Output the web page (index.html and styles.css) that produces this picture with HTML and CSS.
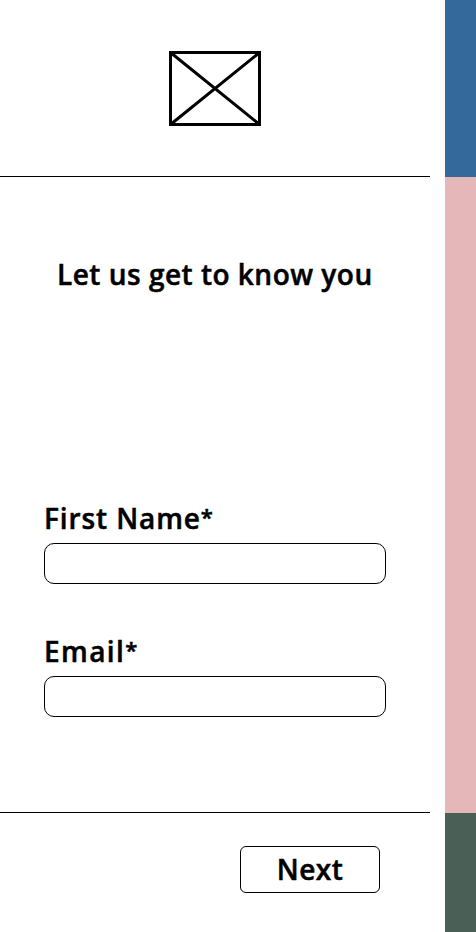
FILE: index.html
```html
<!DOCTYPE html>
<html lang="en">
<head>
<meta charset="utf-8">
<title>Let us get to know you</title>
<link rel="stylesheet" href="styles.css">
</head>
<body>
<div class="layout">
  <div class="screen">
    <header class="header">
      <svg class="logo" width="92" height="75" viewBox="0 0 92 75"><path d="M1.5 1.5H90.5V73.5H1.5ZL90.5 73.5M90.5 1.5L1.5 73.5" fill="none" stroke="#000" stroke-width="3"/></svg>
    </header>
    <main class="content">
      <h1 class="title">Let us get to know you</h1>
      <form class="form">
        <label class="field"><span class="label">First Name<span class="star">*</span></span><input class="input" type="text"></label>
        <label class="field"><span class="label email">Email<span class="star">*</span></span><input class="input" type="email"></label>
      </form>
    </main>
    <footer class="footer"><button class="next" type="button">Next</button></footer>
  </div>
  <aside class="rail"><div class="blue"></div><div class="pink"></div><div class="green"></div></aside>
</div>
</body>
</html>
```
FILE: styles.css
```css
* { box-sizing: border-box; }
body { margin: 0; background: #fff; color: #000; font-family: "Open Sans", sans-serif; }
.layout { display: flex; justify-content: space-between; width: 476px; height: 932px; overflow: hidden; }
.screen { display: flex; flex-direction: column; width: 430px; }
.header { height: 177px; padding-top: 51px; border-bottom: 1px solid #000; text-align: center; }
.logo { display: block; margin: 0 auto; }
.content { height: 635px; padding: 78px 44px 0; }
.title, .label, .next { font: 600 28px/38px "Open Sans", sans-serif; letter-spacing: 0.5px; white-space: nowrap; -webkit-text-stroke: 0.5px #000; }
.title { margin: 0; padding-left: 13px; height: 244px; }
.form { display: flex; flex-direction: column; gap: 52px; }
.field { display: block; height: 81px; }
.label { display: block; height: 40px; letter-spacing: 0.9px; }
.email { letter-spacing: 1.4px; }
.star { font-size: 22px; line-height: 1; position: relative; top: -4px; }
.input { display: block; width: 342px; height: 41px; margin: 4px 0 0; border: 1px solid #000; border-radius: 10px; background: #fff; }
.footer { display: flex; justify-content: flex-end; height: 120px; padding: 33px 50px 0 0; border-top: 1px solid #000; }
.next { display: block; width: 140px; height: 47px; padding: 0 0 2px; border: 1px solid #000; border-radius: 6px; background: #fff; color: #000; text-align: center; }
.rail { display: grid; grid-template-rows: 177px 636px 119px; width: 31px; }
.blue { background: #33699b; }
.pink { background: #e5b7b8; }
.green { background: #4a6056; }
```
